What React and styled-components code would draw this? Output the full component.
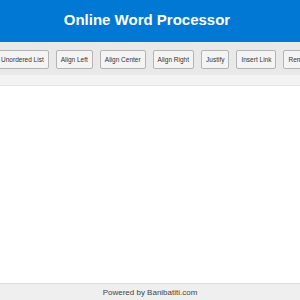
import React from 'react';
import styled, { createGlobalStyle } from 'styled-components';

const tools = [
  'Bold',
  'Italic',
  'Underline',
  'Ordered List',
  'Unordered List',
  'Align Left',
  'Align Center',
  'Align Right',
  'Justify',
  'Insert Link',
  'Remove Link',
  'Image',
  'Undo',
  'Redo',
  'Print',
];

function App() {
  return (
    <Page>
      <GlobalStyle />
      <Header>
        <Title>Online Word Processor</Title>
      </Header>

      <Toolbar>
        {tools.map((t) => (
          <ToolButton key={t}>{t}</ToolButton>
        ))}
      </Toolbar>

      <Editor contentEditable suppressContentEditableWarning />

      <Footer>Powered by Banibatiti.com</Footer>
    </Page>
  );
}

export default App;

const GlobalStyle = createGlobalStyle`
  html, body {
    margin: 0;
    padding: 0;
    height: 100%;
  }
  body {
    font-family: "Liberation Sans", Arial, sans-serif;
    background: #ffffff;
  }
  #root {
    height: 100%;
  }
`;

const Page = styled.div`
  display: flex;
  flex-direction: column;
  height: 100vh;
  overflow: hidden;
`;

const Header = styled.header`
  background: #0078d4;
  height: 42px;
  display: flex;
  align-items: center;
  justify-content: center;
  flex-shrink: 0;
`;

const Title = styled.h1`
  margin: 0 6px 4px 0;
  color: #ffffff;
  font-size: 15px;
  font-weight: bold;
`;

const Toolbar = styled.div`
  display: flex;
  justify-content: center;
  gap: 7px;
  padding: 8px 0 6px;
  background: #e9e9e9;
  border-bottom: 10px solid #f3f3f3;
  overflow: hidden;
  flex-shrink: 0;
`;

const ToolButton = styled.button`
  flex-shrink: 0;
  height: 19px;
  padding: 0 4px;
  border: 1px solid #b4b4b4;
  border-radius: 2px;
  background: #f4f4f4;
  color: #333333;
  font-family: "Liberation Sans", Arial, sans-serif;
  font-size: 6.5px;
  white-space: nowrap;
  cursor: pointer;
`;

const Editor = styled.div`
  flex: 1;
  border-top: 1px solid #e4e4e4;
  background: #ffffff;
  outline: none;
`;

const Footer = styled.footer`
  height: 16px;
  flex-shrink: 0;
  display: flex;
  align-items: center;
  justify-content: center;
  background: #efefef;
  border-top: 1px solid #dddddd;
  color: #444444;
  font-size: 8px;
`;
